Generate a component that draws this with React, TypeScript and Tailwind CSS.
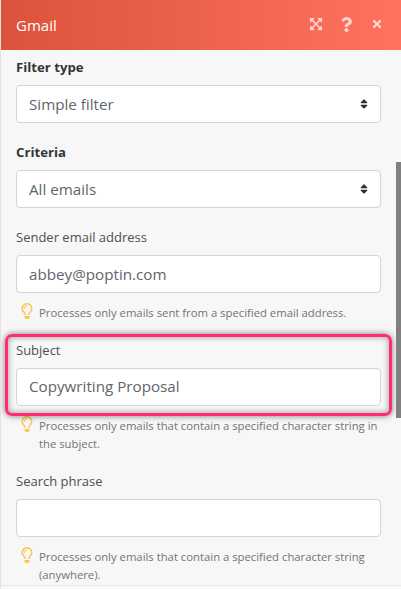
import React from 'react';
import { FaExpandArrowsAlt, FaQuestion, FaTimes, FaRegLightbulb, FaSort } from 'react-icons/fa';

const Hint = ({ children }: { children: React.ReactNode }) => (
  <div className="flex mt-[10px] pl-[5px]">
    <FaRegLightbulb className="w-[12px] h-[16px] text-[#fbc64f] shrink-0" />
    <p className="ml-[6px] mt-[1px] text-[11.3px] leading-[18.5px] text-[#6f7479]">{children}</p>
  </div>
);

const Box = ({ value, select }: { value?: string; select?: boolean }) => (
  <div className="mt-[8px] h-[38px] bg-white border border-[#d2d4d6] rounded-[4px] flex items-center justify-between pl-[12px] pr-[11px] text-[15.2px] text-[#5f656b]">
    <span>{value}</span>
    {select && <FaSort className="w-[10px] h-[12px] text-[#2b2f33]" />}
  </div>
);

const App: React.FC = () => {
  return (
    <div className="relative w-[401px] h-[589px] overflow-hidden bg-[#f7f7f7] border-l border-[#e3e3e3] font-['Open_Sans','Noto_Sans',sans-serif]">
      <div className="h-[50px] bg-gradient-to-r from-[#dc523a] to-[#ff7260] flex items-center pl-[15px] pr-[19px] text-white">
        <h1 className="text-[15px] font-medium">Gmail</h1>
        <div className="ml-auto mb-[2px] flex items-center text-[#fdd5cf]">
          <FaExpandArrowsAlt className="w-[14px] h-[14px]" />
          <FaQuestion className="w-[13px] h-[15px] ml-[17px]" />
          <FaTimes className="w-[10px] h-[12px] ml-[19px]" />
        </div>
      </div>

      <div className="pl-[15px] pr-[20px]">
        <div className="pt-[7px]">
          <label className="block text-[13.2px] leading-[20px] font-bold text-[#333638]">Filter type</label>
          <Box value="Simple filter" select />
        </div>
        <div className="pt-[19px]">
          <label className="block text-[13.2px] leading-[20px] font-bold text-[#333638]">Criteria</label>
          <Box value="All emails" select />
        </div>
        <div className="pt-[19px]">
          <label className="block text-[13px] leading-[20px] text-[#4c5054]">Sender email address</label>
          <Box value="abbey@poptin.com" />
          <Hint>Processes only emails sent from a specified email address.</Hint>
        </div>
        <div className="pt-[17px]">
          <label className="block text-[13px] leading-[20px] text-[#4c5054]">Subject</label>
          <Box value="Copywriting Proposal" />
          <Hint>Processes only emails that contain a specified character string in the subject.</Hint>
        </div>
        <div className="pt-[17px]">
          <label className="block text-[13px] leading-[20px] text-[#4c5054]">Search phrase</label>
          <Box />
          <Hint>Processes only emails that contain a specified character string (anywhere).</Hint>
        </div>
      </div>

      {/* annotation and overlays */}
      <div className="absolute left-[4px] top-[334px] w-[387px] h-[82px] border-[3px] border-[#ff2d6b] rounded-[7px] shadow-[0_0_6px_rgba(0,0,0,0.5),inset_0_0_6px_rgba(0,0,0,0.4)]" />
      <div className="absolute right-0 top-[162px] w-[5px] h-[256px] bg-[#808080]" />
      <div className="absolute left-[-1px] top-[228px] w-[1px] h-[20px] bg-[#e58a80]" />
      <div className="absolute left-[-1px] top-[267px] w-[1px] h-[21px] bg-[#e58a80]" />
      <div className="absolute left-0 right-0 top-[585px] h-[1px] bg-[#e8e8e8]" />
    </div>
  );
};

export default App;
